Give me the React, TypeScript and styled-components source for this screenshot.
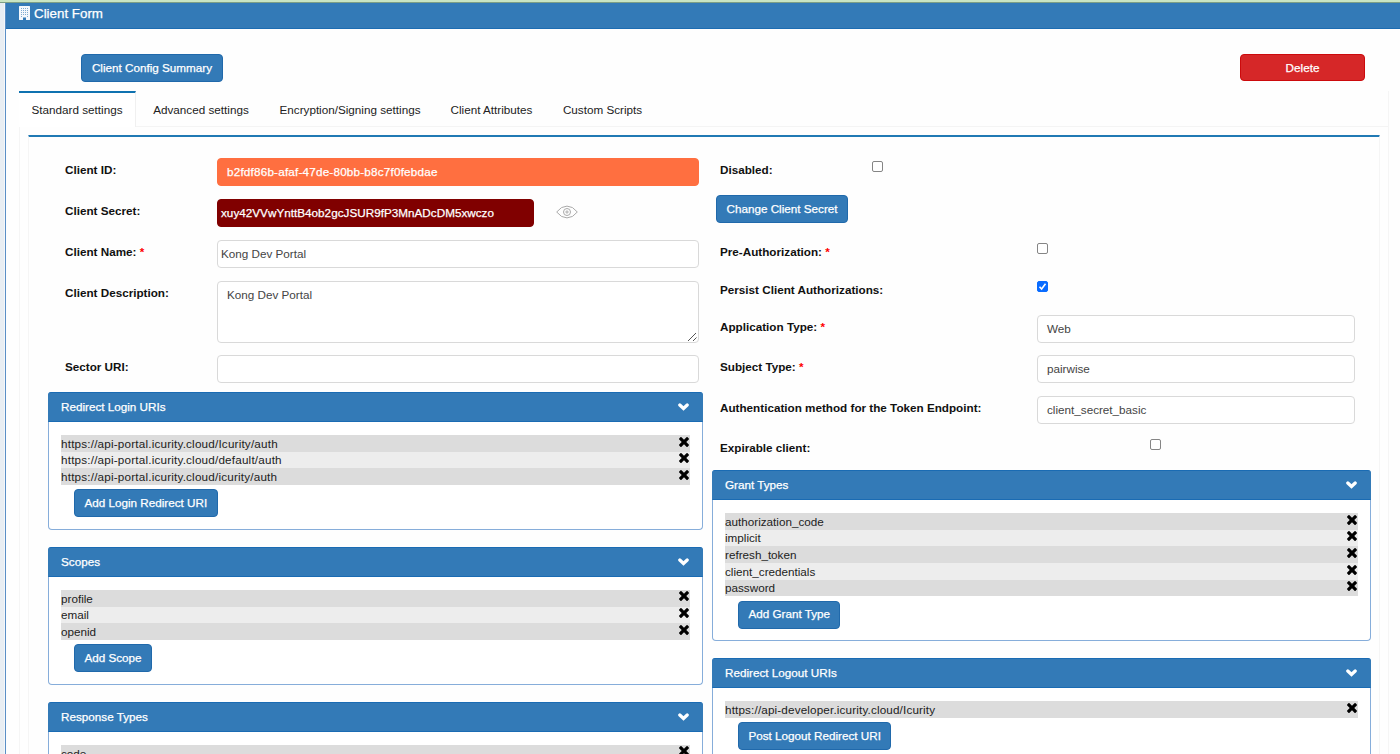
import React from "react";
import styled, { createGlobalStyle, css } from "styled-components";

const GlobalStyle = createGlobalStyle`
  *, *::before, *::after { box-sizing: border-box; }
  html, body { margin: 0; padding: 0; }
  body {
    background: #fefefe;
    color: #222;
    font-family: "Liberation Sans", Arial, Helvetica, sans-serif;
    font-size: 11.7px;
    line-height: 16px;
    overflow: hidden;
  }
`;

const Page = styled.div`
  width: 1400px;
  height: 754px;
  display: flex;
  flex-direction: column;
  overflow: hidden;
`;

const TopStrip = styled.div`
  flex: none;
  height: 3px;
  background: #c9e5c3;
  border-bottom: 1px solid #7d9f86;
`;

const Body = styled.div`
  flex: 1;
  min-height: 0;
  display: flex;
`;

const SideStrip = styled.div`
  flex: none;
  width: 5px;
  background: #e9eef3;
  border-right: 1px solid #f4f7fa;
`;

const Main = styled.main`
  flex: 1;
  min-width: 0;
  border-left: 1px solid #5b8fc6;
  display: flex;
  flex-direction: column;
`;

const TitleBar = styled.header`
  flex: none;
  height: 26px;
  display: flex;
  align-items: flex-start;
  gap: 4px;
  padding: 3px 0 0 13px;
  background: #337ab7;
  border-bottom: 1px solid #1c6cb2;
  color: #fff;
  font-size: 13.35px;
  -webkit-text-stroke: 0.25px #fff;
`;

const ActionBar = styled.div`
  flex: none;
  height: 62px;
  display: flex;
  justify-content: space-between;
  align-items: flex-start;
  padding: 25px 35px 0 75px;
`;

const Button = styled.button<{ $tone?: "danger"; $width?: number; $outset?: boolean }>`
  display: block;
  flex: none;
  height: 28px;
  width: ${(p) => (p.$width ? `${p.$width}px` : "auto")};
  margin-left: ${(p) => (p.$outset ? -4 : 0)}px;
  padding: 0 9.4px;
  border: 1px solid #2069ab;
  border-radius: 4px;
  background: #337ab7;
  color: #fff;
  font: inherit;
  line-height: 23px;
  padding-bottom: 2px;
  white-space: nowrap;
  text-align: center;
  -webkit-text-stroke: 0.25px #fff;
  ${(p) =>
    p.$tone === "danger" &&
    css`
      height: 27px;
      background: #d62728;
      border-color: #cc0a0c;
      padding-bottom: 0;
    `}
`;

const TabCard = styled.section`
  flex: 1;
  min-height: 0;
  margin: 0 11px 0 13px;
  border-right: 1px solid #f5f5f5;
  border-left: 1px solid #f5f5f5;
  display: flex;
  flex-direction: column;
`;

const TabList = styled.nav`
  flex: none;
  height: 36px;
  display: flex;
  border-bottom: 1px solid #f4f4f4;
`;

const Tab = styled.a<{ $active?: boolean; $width: number }>`
  flex: none;
  width: ${(p) => p.$width}px;
  height: 36px;
  padding-top: ${(p) => (p.$active ? 9 : 11)}px;
  text-align: center;
  white-space: nowrap;
  color: #222;
  ${(p) =>
    p.$active &&
    css`
      margin-left: -1px;
      background: #fff;
      border-top: 2px solid #0f72b0;
      border-right: 1px solid #f0f0f0;
    `}
`;

const FormCard = styled.div`
  flex: 1;
  min-height: 0;
  margin: 8px 8px 0;
  border: 1px solid #f5f5f5;
  border-bottom: 0;
  border-top: 2px solid #2079b4;
  border-radius: 1px 1px 0 0;
  display: flex;
  align-items: flex-start;
  gap: 9px;
  padding: 21px 7px 0 19px;
`;

const Column = styled.div<{ $width: number }>`
  flex: none;
  width: ${(p) => p.$width}px;
  display: flex;
  flex-direction: column;
`;

const Row = styled.div<{ $height: number; $side: "left" | "right" }>`
  flex: none;
  height: ${(p) => p.$height}px;
  display: flex;
  align-items: flex-start;
  padding-left: ${(p) => (p.$side === "left" ? 17 : 8)}px;
`;

const Label = styled.label<{ $width: number }>`
  flex: none;
  width: ${(p) => p.$width}px;
  padding-top: 4px;
  font-weight: 700;
  color: #111;
  white-space: nowrap;
`;

const Star = styled.span`
  color: #f00;
`;

const Field = styled.div<{ $width: number; $inset?: number; $tall?: boolean }>`
  position: relative;
  flex: none;
  width: ${(p) => p.$width}px;
  height: ${(p) => (p.$tall ? 62 : 28)}px;
  padding: 5px 0 0 ${(p) => p.$inset ?? 9}px;
  border: 1px solid #d9d9d9;
  border-radius: 4px;
  background: #fff;
  color: #444;
  white-space: nowrap;
`;

const FilledField = styled(Field)<{ $fill: string; $spacing?: number }>`
  background: ${(p) => p.$fill};
  border-color: ${(p) => p.$fill};
  color: #fff;
  letter-spacing: ${(p) => p.$spacing ?? 0}px;
  -webkit-text-stroke: 0.25px #fff;
`;

const Grip = styled.svg`
  position: absolute;
  right: 0;
  bottom: 0;
`;

const EyeIcon = styled.svg`
  margin: 6px 0 0 22px;
`;

const Check = styled.span<{ $checked?: boolean; $shift?: number }>`
  flex: none;
  width: 11px;
  height: 11px;
  margin: 3px 0 0 ${(p) => p.$shift ?? 0}px;
  border: 1px solid ${(p) => (p.$checked ? "#0a6cff" : "#858585")};
  border-radius: 2px;
  background: ${(p) => (p.$checked ? "#0a6cff" : "#fff")};

  svg { display: block; }
`;

const PanelBox = styled.section`
  flex: none;
  margin-bottom: 16.9px;
  border: 1px solid #86adda;
  border-top: 0;
  border-radius: 4px;
  background: #fff;
`;

const PanelHead = styled.header`
  height: 30px;
  margin: 0 -1px;
  display: flex;
  justify-content: space-between;
  align-items: flex-start;
  padding: 6px 13px 0 12px;
  border: 1px solid #1a6bb3;
  border-left-color: #337ab7;
  border-right-color: #337ab7;
  border-radius: 3px 3px 0 0;
  background: #337ab7;
  color: #fff;
  -webkit-text-stroke: 0.25px #fff;

  svg { margin-top: 4px; }
`;

const PanelBody = styled.div`
  padding: 13px 12px 11.6px;
`;

const Entry = styled.div<{ $odd: boolean }>`
  height: 16.7px;
  display: flex;
  justify-content: space-between;
  align-items: flex-start;
  padding-right: 1px;
  background: ${(p) => (p.$odd ? "#dcdcdc" : "#ededed")};
  color: #222;
  white-space: nowrap;

  svg { margin-top: 1.5px; }
`;

const EntryText = styled.span<{ $spacing: number }>`
  padding-top: 0.7px;
  letter-spacing: ${(p) => p.$spacing}px;
`;

const PanelAction = styled.div`
  display: flex;
  padding: 4.4px 0 0 13px;
`;

const Cross = () => (
  <svg width="10" height="10" viewBox="110 366 1188 1188">
    <path
      fill="#000"
      d="M1298 1322q0 40-28 68l-136 136q-28 28-68 28t-68-28l-294-294-294 294q-28 28-68 28t-68-28l-136-136q-28-28-28-68t28-68l294-294-294-294q-28-28-28-68t28-68l136-136q28-28 68-28t68 28l294 294 294-294q28-28 68-28t68 28l136 136q28 28 28 68t-28 68l-294 294 294 294q28 28 28 68z"
    />
  </svg>
);

const Chevron = () => (
  <svg width="11" height="8" viewBox="0 0 11 8">
    <path d="M1.8 2 L5.5 5.400 L9.200 2" fill="none" stroke="#fff" strokeWidth="3.300" strokeLinecap="round" strokeLinejoin="miter" />
  </svg>
);

const Building = () => (
  <svg width="11" height="14" viewBox="0 0 11 14">
    <path fill="#f4f8fc" fillRule="evenodd" d="M.6 0h9.8q.6 0 .6.6v12.8q0 .6-.6.6H7v-2.600H4V14H.6q-.6 0-.6-.6V.6Q0 0 .6 0z" />
    <g fill="#337ab7" opacity=".6">
      {[2, 4, 6, 8].map((y) =>
        [2, 4, 6, 8].map((x) => <rect key={`${x}-${y}`} x={x} y={y} width="1" height="1" />)
      )}
      <rect x="2" y="10" width="1" height="1" />
      <rect x="8" y="10" width="1" height="1" />
    </g>
  </svg>
);

interface PanelProps {
  title: string;
  items: string[];
  action?: string;
  spacing?: number;
}

const Panel = ({ title, items, action, spacing = 0 }: PanelProps) => (
  <PanelBox>
    <PanelHead>
      <span>{title}</span>
      <Chevron />
    </PanelHead>
    <PanelBody>
      {items.map((item, i) => (
        <Entry key={item} $odd={i % 2 === 0}>
          <EntryText $spacing={spacing}>{item}</EntryText>
          <Cross />
        </Entry>
      ))}
      {action && (
        <PanelAction>
          <Button>{action}</Button>
        </PanelAction>
      )}
    </PanelBody>
  </PanelBox>
);

interface SelectRowProps {
  label: string;
  value: string;
  required?: boolean;
  height: number;
}

const SelectRow = ({ label, value, required, height }: SelectRowProps) => (
  <Row $side="right" $height={height}>
    <Label $width={317}>
      {label} {required && <Star>*</Star>}
    </Label>
    <Field $width={318}>{value}</Field>
  </Row>
);

export default function App() {
  return (
    <Page>
      <GlobalStyle />
      <TopStrip />
      <Body>
        <SideStrip />
        <Main>
          <TitleBar>
            <Building />
            <span>Client Form</span>
          </TitleBar>
          <ActionBar>
            <Button $width={142}>Client Config Summary</Button>
            <Button $tone="danger" $width={125}>Delete</Button>
          </ActionBar>
          <TabCard>
            <TabList>
              <Tab $active $width={117}>Standard settings</Tab>
              <Tab $width={130}>Advanced settings</Tab>
              <Tab $width={168}>Encryption/Signing settings</Tab>
              <Tab $width={115}>Client Attributes</Tab>
              <Tab $width={107}>Custom Scripts</Tab>
            </TabList>
            <FormCard>
              <Column $width={655}>
                <Row $side="left" $height={41}>
                  <Label $width={152}>Client ID:</Label>
                  <FilledField $width={482} $fill="#ff6f40" $spacing={0.2}>b2fdf86b-afaf-47de-80bb-b8c7f0febdae</FilledField>
                </Row>
                <Row $side="left" $height={41}>
                  <Label $width={152}>Client Secret:</Label>
                  <FilledField $width={317} $inset={3} $fill="#800000" $spacing={0.02}>xuy42VVwYnttB4ob2gcJSUR9fP3MnADcDM5xwczo</FilledField>
                  <EyeIcon width="22" height="14" viewBox="0 0 22 14" fill="none" stroke="#aaa" strokeWidth="1">
                    <path d="M.7 7Q5.200 1.100 11 1.100T21.300 7Q16.800 12.900 11 12.900T.7 7z" />
                    <circle cx="11" cy="7" r="3.500" />
                    <circle cx="11" cy="7" r="1.100" />
                  </EyeIcon>
                </Row>
                <Row $side="left" $height={41}>
                  <Label $width={152}>Client Name: <Star>*</Star></Label>
                  <Field $width={482} $inset={3}>Kong Dev Portal</Field>
                </Row>
                <Row $side="left" $height={74}>
                  <Label $width={152}>Client Description:</Label>
                  <Field $width={482} $tall>
                    Kong Dev Portal
                    <Grip width="11" height="11" viewBox="0 0 11 11" stroke="#555" strokeWidth="1" fill="none">
                      <path d="M1 10L9 2M6 10L9.500 6.500" />
                    </Grip>
                  </Field>
                </Row>
                <Row $side="left" $height={37}>
                  <Label $width={152}>Sector URI:</Label>
                  <Field $width={482} />
                </Row>
                <Panel
                  title="Redirect Login URIs"
                  action="Add Login Redirect URI"
                  spacing={0.19}
                  items={[
                    "https://api-portal.icurity.cloud/Icurity/auth",
                    "https://api-portal.icurity.cloud/default/auth",
                    "https://api-portal.icurity.cloud/icurity/auth",
                  ]}
                />
                <Panel title="Scopes" action="Add Scope" items={["profile", "email", "openid"]} />
                <Panel title="Response Types" items={["code"]} />
              </Column>
              <Column $width={659}>
                <Row $side="right" $height={37}>
                  <Label $width={152}>Disabled:</Label>
                  <Check />
                </Row>
                <Row $side="right" $height={45}>
                  <Button $outset $width={132}>Change Client Secret</Button>
                </Row>
                <Row $side="right" $height={38}>
                  <Label $width={317}>Pre-Authorization: <Star>*</Star></Label>
                  <Check />
                </Row>
                <Row $side="right" $height={37}>
                  <Label $width={317}>Persist Client Authorizations:</Label>
                  <Check $checked>
                    <svg width="9" height="9" viewBox="0 0 9 9">
                      <path d="M1.500 4.800L3.600 7L7.500 1.700" fill="none" stroke="#fff" strokeWidth="1.600" />
                    </svg>
                  </Check>
                </Row>
                <SelectRow label="Application Type:" value="Web" required height={40} />
                <SelectRow label="Subject Type:" value="pairwise" required height={41} />
                <SelectRow label="Authentication method for the Token Endpoint:" value="client_secret_basic" height={40} />
                <Row $side="right" $height={34}>
                  <Label $width={317}>Expirable client:</Label>
                  <Check $shift={113} />
                </Row>
                <Panel
                  title="Grant Types"
                  action="Add Grant Type"
                  items={["authorization_code", "implicit", "refresh_token", "client_credentials", "password"]}
                />
                <Panel
                  title="Redirect Logout URIs"
                  action="Post Logout Redirect URI"
                  spacing={0.15}
                  items={["https://api-developer.icurity.cloud/Icurity"]}
                />
              </Column>
            </FormCard>
          </TabCard>
        </Main>
      </Body>
    </Page>
  );
}
